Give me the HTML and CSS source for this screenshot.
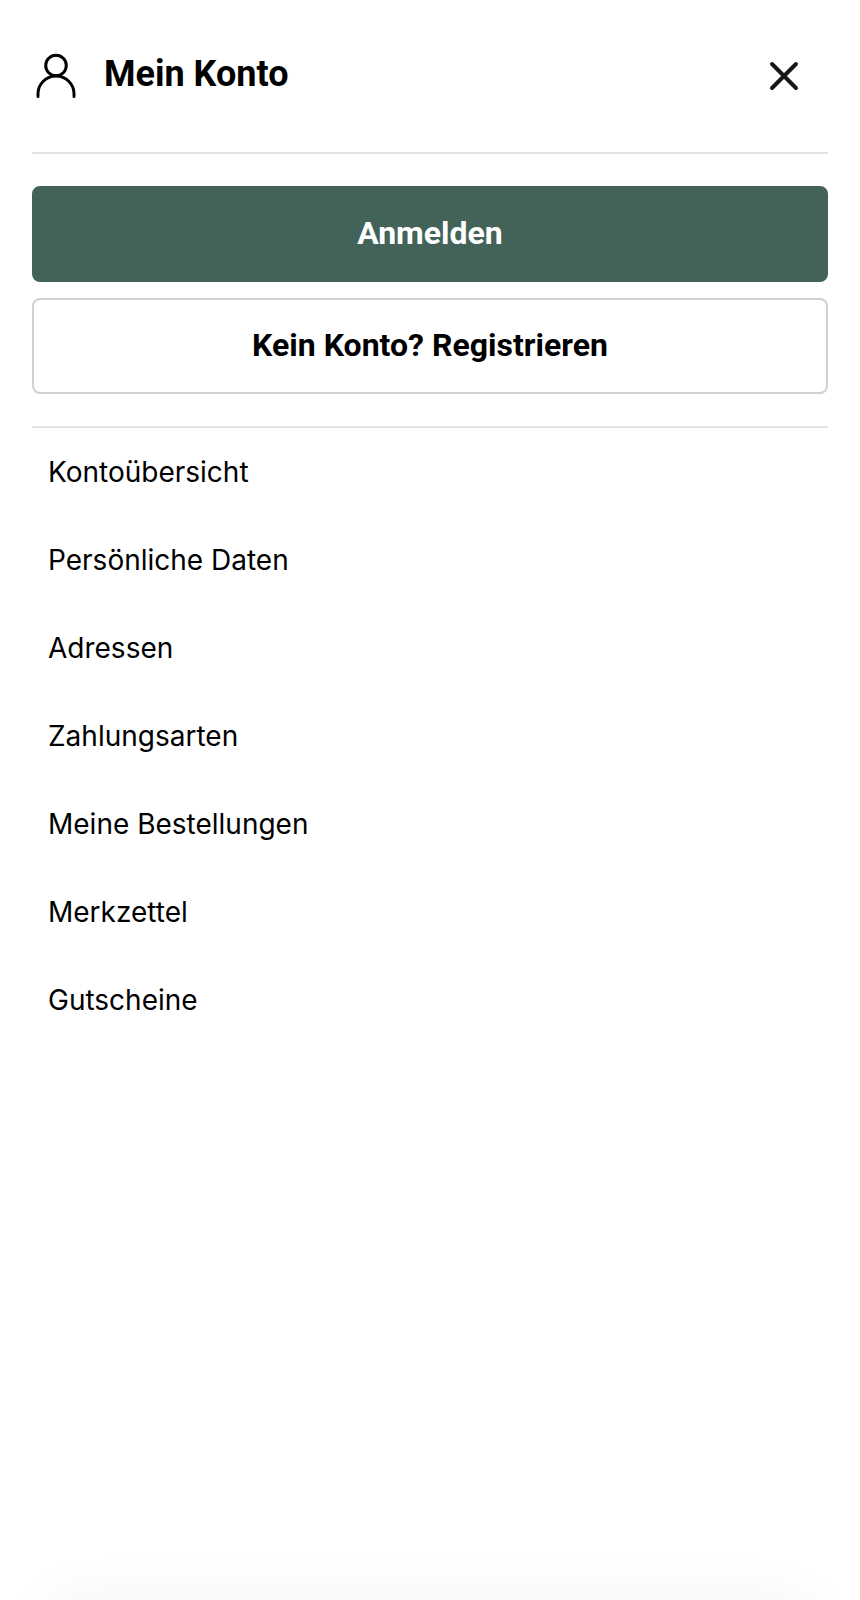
FILE: index.html
```
<!doctype html>
<html lang="de">
  <head>
    <meta charset="UTF-8" />
    <meta name="viewport" content="width=device-width, initial-scale=1.0" />
    <title>Mein Konto</title>
    <link rel="stylesheet" href="styles.css">
  </head>
  <body>
    <div class="account-panel">
      <header class="account-header">
        <svg class="account-icon" viewBox="0 0 48 48" aria-hidden="true">
          <circle cx="24" cy="13.5" r="10.3" />
          <path d="M6 44.5V42C6 32 14 24 24 24S42 32 42 42V44.5" />
        </svg>
        <h1 class="account-title">Mein Konto</h1>
        <button type="button" class="close-btn" aria-label="Schließen">
          <svg class="close-icon" viewBox="0 0 32 32" aria-hidden="true">
            <path d="M4 4 28 28M28 4 4 28" />
          </svg>
        </button>
      </header>

      <div class="account-actions">
        <button type="button" class="btn btn-primary">Anmelden</button>
        <button type="button" class="btn btn-outline">Kein Konto? Registrieren</button>
      </div>

      <nav class="account-nav" aria-label="Mein Konto">
        <a class="nav-link" href="#uebersicht">Kontoübersicht</a>
        <a class="nav-link" href="#daten">Persönliche Daten</a>
        <a class="nav-link" href="#adressen">Adressen</a>
        <a class="nav-link" href="#zahlungsarten">Zahlungsarten</a>
        <a class="nav-link" href="#bestellungen">Meine Bestellungen</a>
        <a class="nav-link" href="#merkzettel">Merkzettel</a>
        <a class="nav-link" href="#gutscheine">Gutscheine</a>
      </nav>

      <div class="bottom-shadow"></div>
    </div>
  </body>
</html>
```
FILE: styles.css
```
* {
  box-sizing: border-box;
}

body {
  margin: 0;
  background: #fff;
  color: #000;
  font-family: Inter, Arial, sans-serif;
}

.account-panel {
  display: flex;
  flex-direction: column;
  min-height: 100vh;
  padding: 0 32px;
  overflow: hidden;
}

.account-header {
  display: flex;
  align-items: center;
  padding: 48px 24px 48px 0;
  border-bottom: 2px solid #e4e4e4;
}

.account-icon {
  width: 48px;
  height: 48px;
  margin: 4px 0;
  fill: none;
  stroke: #000;
  stroke-width: 3;
  stroke-linecap: round;
}

.account-title {
  flex: 1;
  margin: 0 0 4px 24px;
  font-family: Roboto, Arial, sans-serif;
  font-size: 36px;
  font-weight: 700;
  line-height: 44px;
}

.close-btn {
  display: flex;
  padding: 4px;
  border: none;
  background: none;
  cursor: pointer;
}

.close-icon {
  width: 32px;
  height: 32px;
  fill: none;
  stroke: #1a1718;
  stroke-width: 4;
  stroke-linecap: round;
}

.account-actions {
  display: flex;
  flex-direction: column;
  gap: 16px;
  padding: 32px 0;
  border-bottom: 2px solid #e4e4e4;
}

.btn {
  width: 100%;
  padding: 26px 32px 28px;
  border: 2px solid transparent;
  border-radius: 8px;
  font-family: Roboto, Arial, sans-serif;
  font-size: 32px;
  font-weight: 700;
  line-height: 38px;
  cursor: pointer;
}

.btn-primary {
  border-color: #436359;
  background: #436359;
  color: #fff;
}

.btn-outline {
  border-color: #d0d0d0;
  background: #fff;
  color: #000;
}

.account-nav {
  display: flex;
  flex-direction: column;
}

.nav-link {
  padding: 22px 16px;
  color: #000;
  font-size: 28px;
  line-height: 44px;
  text-decoration: none;
}

/* soft shadow rising from below the panel */
.bottom-shadow {
  height: 64px;
  margin: auto 24px -72px;
  box-shadow: 0 0 64px rgba(0, 0, 0, 0.07);
}
```
